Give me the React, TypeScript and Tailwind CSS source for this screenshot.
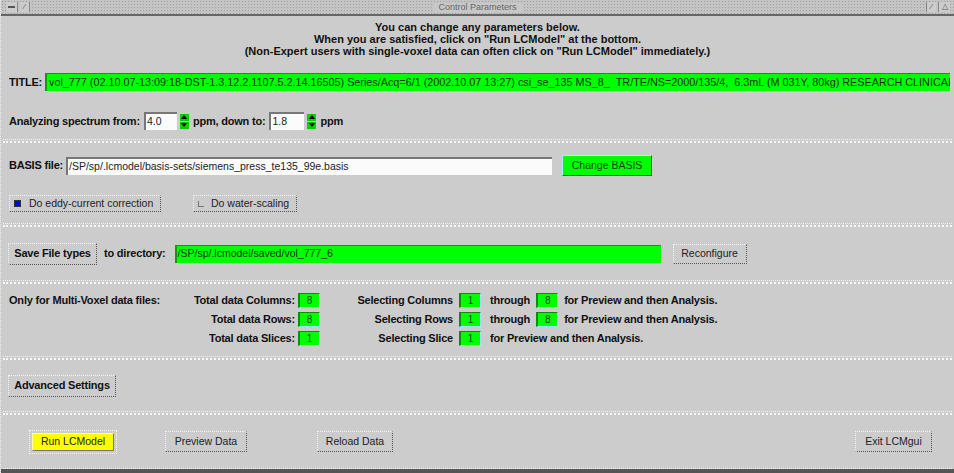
import { ReactNode } from "react";

const raised =
  "border border-dotted border-t-[#f4f4f4] border-l-[#f4f4f4] border-b-[#555] border-r-[#555]";

function Separator() {
  return (
    <div className="h-[4px] border-t border-dotted border-t-[#f2f2f2] border-b-2 border-b-[#f8f8f8] mx-[2px]" />
  );
}

function Button({
  children,
  className = "",
  bold = false,
}: {
  children: ReactNode;
  className?: string;
  bold?: boolean;
}) {
  return (
    <div
      className={`${raised} flex items-center justify-center px-[4px] leading-none ${
        bold ? "text-[11px] font-bold tracking-[-0.2px] text-[#111]" : "text-[10.5px] text-[#222]"
      } ${className}`}
    >
      {children}
    </div>
  );
}

function GreenBox({ value }: { value: string }) {
  return (
    <div className="w-[22px] h-[15px] bg-[#00ff00] border-l-2 border-t border-[#118811] border-b border-r border-b-[#9ef] border-r-[#9ef] flex items-center justify-center text-[10px] font-normal text-[#114411]">
      {value}
    </div>
  );
}

function Spinner() {
  return (
    <div className="flex flex-col gap-[1px] w-[9px] ml-[3px]">
      <div className="h-[7px] bg-[#00d000] flex items-center justify-center">
        <div className="w-0 h-0 border-l-[3px] border-r-[3px] border-b-[4px] border-l-transparent border-r-transparent border-b-black" />
      </div>
      <div className="h-[7px] bg-[#00d000] flex items-center justify-center">
        <div className="w-0 h-0 border-l-[3px] border-r-[3px] border-t-[4px] border-l-transparent border-r-transparent border-t-black" />
      </div>
    </div>
  );
}

function WhiteInput({ value, className = "" }: { value: string; className?: string }) {
  return (
    <div
      className={`h-[18px] bg-[#fbfbfb] border-l-2 border-t-2 border-[#777] flex items-center pl-[1px] text-[10.5px] font-normal tracking-normal text-[#222] ${className}`}
    >
      {value}
    </div>
  );
}

function VoxelRow({
  lead,
  total,
  totalValue,
  select,
  from,
  to,
}: {
  lead?: string;
  total: string;
  totalValue: string;
  select: string;
  from: string;
  to?: string;
}) {
  return (
    <div className="flex items-center h-[18px] text-[11px] font-bold tracking-[-0.2px] text-[#111]">
      <div className="w-[160px] pl-[8px]">{lead}</div>
      <div className="w-[137px] text-right pr-[3px]">{total}</div>
      <GreenBox value={totalValue} />
      <div className="w-[139px] text-right pr-[6px]">{select}</div>
      <GreenBox value={from} />
      {to ? (
        <>
          <span className="ml-[9px] mr-[6px]">through</span>
          <GreenBox value={to} />
          <span className="ml-[6px]">for Preview and then Analysis.</span>
        </>
      ) : (
        <span className="ml-[9px]">for Preview and then Analysis.</span>
      )}
    </div>
  );
}

export default function App() {
  return (
    <div
      className="w-[954px] h-[473px] bg-[#cccccc] overflow-hidden whitespace-nowrap flex flex-col border-l border-dotted border-l-[#eee]"
      style={{ fontFamily: '"Liberation Sans", Arial, sans-serif' }}
    >
      {/* window title bar */}
      <div className="h-[14px] flex items-center bg-[#c4c4c4] bg-[radial-gradient(#a0a0a0_0.6px,transparent_0.7px)] bg-[length:3px_3px] relative">
        <div className="flex ml-[5px] gap-[2px]">
          <div className="w-[12px] h-[10px] bg-[#ccc] border-r border-[#888] flex items-center justify-center">
            <div className="w-[7px] h-[2px] bg-[#555]" />
          </div>
          <div className="w-[10px] h-[10px] bg-[#ccc] border-r border-[#888] text-[8px] leading-none text-[#555] flex items-center justify-center">
            ⁄
          </div>
        </div>
        <div className="absolute left-1/2 -translate-x-1/2 px-[6px] bg-[#c8c8c8] text-[9px] text-[#666] leading-none">
          Control Parameters
        </div>
        <div className="flex ml-auto mr-[4px] gap-[2px]">
          <div className="w-[10px] h-[10px] bg-[#ccc] border-l border-[#888] text-[8px] leading-none text-[#555] flex items-center justify-center">
            ⁄
          </div>
          <div className="w-[12px] h-[10px] bg-[#ccc] border-l border-[#888] text-[8px] leading-none text-[#555] flex items-center justify-center">
            △
          </div>
        </div>
      </div>
      <div className="h-[2px] bg-[#666]" />

      {/* intro + title + ppm range */}
      <div className="h-[123px] flex flex-col">
        <div className="pt-[5px] flex flex-col items-center text-[11px] leading-[12px] font-bold text-[#111]">
          <div>You can change any parameters below.</div>
          <div>When you are satisfied, click on "Run LCModel" at the bottom.</div>
          <div>(Non-Expert users with single-voxel data can often click on "Run LCModel" immediately.)</div>
        </div>
        <div className="flex items-center mt-[15px] pl-[8px] h-[20px]">
          <span className="text-[11px] font-bold tracking-[-0.2px] text-[#111] mr-[3px]">TITLE:</span>
          <div className="flex-1 h-[18px] bg-[#00ff00] border-l-2 border-t border-[#119911] mr-[4px] overflow-hidden flex items-center pl-[2px] text-[10.8px] text-[#113311]">
            vol_777 (02.10.07-13:09:18-DST-1.3.12.2.1107.5.2.14.16505) Series/Acq=6/1 (2002.10.07 13:27) csi_se_135 MS_8_&nbsp;&nbsp;TR/TE/NS=2000/135/4,&nbsp;&nbsp;6.3mL (M 031Y, 80kg) RESEARCH CLINICAL
          </div>
        </div>
        <div className="flex items-center mt-[20px] pl-[8px] h-[18px] text-[11px] font-bold tracking-[-0.2px] text-[#111]">
          <span className="mr-[4px]">Analyzing spectrum from:</span>
          <WhiteInput value="4.0" className="w-[33px]" />
          <Spinner />
          <span className="ml-[4px] mr-[4px]">ppm, down to:</span>
          <WhiteInput value="1.8" className="w-[35px]" />
          <Spinner />
          <span className="ml-[4px]">ppm</span>
        </div>
      </div>
      <Separator />

      {/* basis */}
      <div className="h-[80px] flex flex-col">
        <div className="flex items-center mt-[12px] pl-[8px] h-[21px]">
          <span className="text-[11px] font-bold tracking-[-0.2px] text-[#111] mr-[3px]">BASIS file:</span>
          <WhiteInput value="/SP/sp/.lcmodel/basis-sets/siemens_press_te135_99e.basis" className="w-[486px]" />
          <div className="ml-[10px] w-[90px] h-[21px] bg-[#00ff00] border border-t-[#aef] border-l-[#aef] border-b-[#0a7a0a] border-r-[#0a7a0a] flex items-center justify-center text-[10.5px] text-[#114411]">
            Change BASIS
          </div>
        </div>
        <div className="flex items-center mt-[19px] pl-[8px] h-[17px]">
          <Button className="w-[152px] h-[17px] justify-start px-[3px]">
            <div className="w-[7px] h-[7px] bg-[#0000ff] border border-[#333] mr-[8px]" />
            Do eddy-current correction
          </Button>
          <Button className="ml-[32px] w-[104px] h-[17px] justify-start px-[3px]">
            <div className="w-[6px] h-[6px] border-b border-l border-[#777] mr-[7px]" />
            Do water-scaling
          </Button>
        </div>
      </div>
      <Separator />

      {/* save */}
      <div className="h-[53px] flex items-center pl-[7px]">
        <Button bold className="w-[89px] h-[22px]">
          Save File types
        </Button>
        <span className="ml-[7px] text-[11px] font-bold tracking-[-0.2px] text-[#111]">to directory:</span>
        <div className="ml-[9px] w-[486px] h-[18px] bg-[#00ff00] border-l-2 border-t border-[#119911] flex items-center pl-[1px] text-[10.5px] text-[#113311]">
          /SP/sp/.lcmodel/saved/vol_777_6
        </div>
        <Button className="ml-[12px] w-[74px] h-[20px]">Reconfigure</Button>
      </div>
      <Separator />

      {/* multi-voxel */}
      <div className="h-[72px] flex flex-col pt-[7px] gap-[1px]">
        <VoxelRow
          lead="Only for Multi-Voxel data files:"
          total="Total data Columns:"
          totalValue="8"
          select="Selecting Columns"
          from="1"
          to="8"
        />
        <VoxelRow total="Total data Rows:" totalValue="8" select="Selecting Rows" from="1" to="8" />
        <VoxelRow total="Total data Slices:" totalValue="1" select="Selecting Slice" from="1" />
      </div>
      <Separator />

      {/* advanced */}
      <div className="h-[51px] flex items-center pl-[7px]">
        <Button bold className="w-[108px] h-[22px]">
          Advanced Settings
        </Button>
      </div>
      <Separator />

      {/* actions */}
      <div className="h-[53px] flex items-center">
        <div className="ml-[28px] border border-dotted border-[#f4f4f4] p-[2px]">
          <div className="w-[82px] h-[18px] bg-[#ffff00] border border-b-[#777] border-r-[#777] border-t-[#ffffaa] border-l-[#ffffaa] flex items-center justify-center text-[10.5px] text-[#222]">
            Run LCModel
          </div>
        </div>
        <Button className="ml-[48px] w-[82px] h-[21px]">Preview Data</Button>
        <Button className="ml-[70px] w-[76px] h-[21px]">Reload Data</Button>
        <Button className="ml-auto mr-[22px] w-[77px] h-[21px]">Exit LCMgui</Button>
      </div>
      <div className="h-[1px] mx-[2px] border-t border-dotted border-[#f2f2f2]" />
      <div className="flex-1 bg-[#555]" />
    </div>
  );
}
